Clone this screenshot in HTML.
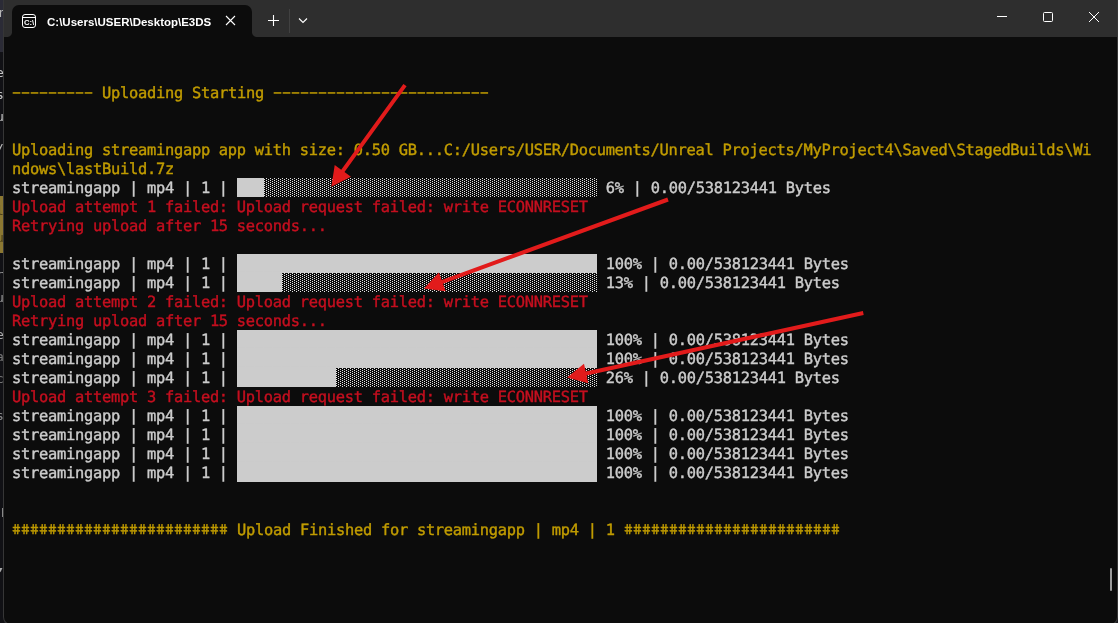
<!DOCTYPE html>
<html lang="en">
<head>
<meta charset="utf-8">
<title>C:\Users\USER\Desktop\E3DS</title>
<style>
html,body{margin:0;padding:0;}
body{width:1118px;height:623px;overflow:hidden;background:#1c1c20;position:relative;font-family:"Liberation Sans",sans-serif;}
#strip{position:absolute;left:0;top:0;width:4px;height:623px;background:#111115;overflow:hidden;will-change:transform;font-family:"DejaVu Sans Mono","Liberation Mono",monospace;}
#strip .top{position:absolute;left:0;top:0;width:4px;height:52px;background:#2b2b36;}
#strip .yl{position:absolute;left:0;top:196px;width:4px;height:57px;background:#8c7832;}
#strip .bar{position:absolute;left:2px;top:508px;width:1.5px;height:9px;background:#8a8a8a;}
#strip span{position:absolute;left:-4px;width:9px;height:19px;line-height:19px;font-size:13px;color:#c4c4c4;}
#win{position:absolute;left:3px;top:0;width:1115px;height:625px;background:#0c0c0c;border:1px solid #363636;border-top:0;box-sizing:border-box;border-radius:0 0 8px 8px;overflow:hidden;}
#titlebar{position:absolute;left:0;top:0;width:100%;height:37px;background:#2e2e2e;will-change:transform;}
#tab{position:absolute;left:8px;top:5px;width:240px;height:32px;background:#0c0c0c;border-radius:7px 7px 0 0;}
#tab:before,#tab:after{content:"";position:absolute;bottom:0;width:5px;height:5px;background:radial-gradient(circle at 0 0,#2e2e2e 4.5px,#0c0c0c 5.5px);}
#tab:before{left:-5px;}
#tab:after{right:-5px;background:radial-gradient(circle at 100% 0,#2e2e2e 4.5px,#0c0c0c 5.5px);}
#tabtitle{position:absolute;left:35px;top:9px;font-size:11.5px;line-height:16px;font-weight:bold;color:#fff;white-space:pre;letter-spacing:0px;}
svg{position:absolute;overflow:visible;}
#term{position:absolute;left:0;top:0;width:1118px;height:623px;font-family:"DejaVu Sans Mono","Liberation Mono",monospace;font-size:15.4px;letter-spacing:-0.2716px;will-change:transform;text-rendering:geometricPrecision;-webkit-text-stroke:0.4px;}
.ln{position:absolute;left:12px;height:19px;line-height:19px;white-space:pre;}
.d{display:inline-block;height:19px;vertical-align:top;letter-spacing:-4.6562px;-webkit-text-stroke:0;transform:translate(-4.45px,-0.35px) scale(1.95,1.2);transform-origin:0 9.8px;}
.h{display:inline-block;height:19px;vertical-align:top;letter-spacing:1.3166px;transform:translateX(0.58px) skewX(11.5deg) scale(0.85,0.89);transform-origin:0 8.5px;}
.y{color:#c19c00;}
.r{color:#c50f1f;}
.w{color:#cccccc;}
.f{display:inline-block;height:19px;position:relative;top:-1px;overflow:hidden;vertical-align:top;background:#cccccc;color:#cccccc;}
.e{display:inline-block;height:19px;position:relative;top:-1px;overflow:hidden;vertical-align:top;color:transparent;letter-spacing:0;
background-color:#0c0c0c;
background-image:radial-gradient(circle at 0.5px 1.5px,#e4e4e4 0.55px,rgba(228,228,228,0) 0.6px),radial-gradient(circle at 2.5px 0.5px,#e4e4e4 0.55px,rgba(228,228,228,0) 0.6px);
background-size:4px 2px;}
#thumb{position:absolute;left:1110px;top:568px;width:2px;height:23px;background:#9a9a9a;border-radius:1px;}
</style>
</head>
<body>
<div id="strip"><div class="top"></div><div class="yl"></div><div class="bar"></div>
<span style="top:3px;font-family:'Liberation Sans',sans-serif;font-size:13px;left:-1px;color:#b5b5b5">r</span><span style="top:63px">e</span><span style="top:85px">s</span><span style="top:107px">u</span><span style="top:139px;color:#bbb">/</span><span style="top:201px;color:#4a3f18">l</span><span style="top:228px;color:#4a3f18">u</span><span style="top:265px;color:#999">r</span><span style="top:288px;color:#999">u</span><span style="top:325px;color:#aaa">e</span><span style="top:347px;color:#777">a</span><span style="top:369px;color:#777">c</span><span style="top:406px;color:#888">s</span><span style="top:560px;color:#aaa;font-size:11px;left:-3px">&#9662;</span>
</div>
<div id="win">
  <div id="titlebar">
    <div id="tab">
      <svg style="left:10px;top:9px" width="14" height="14" viewBox="0 0 14 14" fill="none" stroke="#fff" stroke-width="1">
        <rect x="0.5" y="0.5" width="13" height="13" rx="2.5"/>
        <line x1="0.5" y1="3.5" x2="13.5" y2="3.5"/>
        <text x="1.9" y="11" font-family="Liberation Sans, sans-serif" font-size="7" font-weight="bold" fill="#fff" stroke="none" textLength="10.3" lengthAdjust="spacingAndGlyphs">C:\</text>
      </svg>
      <div id="tabtitle">C:\Users\USER\Desktop\E3DS</div>
      <svg style="left:214px;top:11px" width="9" height="9" viewBox="0 0 9 9" stroke="#fff" stroke-width="1.1" fill="none"><path d="M0 0L9 9M9 0L0 9"/></svg>
    </div>
    <svg style="left:264px;top:15px" width="11" height="11" viewBox="0 0 11 11" stroke="#fff" stroke-width="1.1" fill="none"><path d="M5.5 0V11M0 5.5H11"/></svg>
    <div style="position:absolute;left:285px;top:9px;width:1px;height:24px;background:#414141"></div>
    <svg style="left:295px;top:18px" width="8" height="5" viewBox="0 0 8 5" stroke="#fff" stroke-width="1.1" fill="none"><path d="M0 0.5L4 4.5L8 0.5"/></svg>
    <svg style="left:993px;top:16px" width="10" height="1" viewBox="0 0 10 1" stroke="#fff" stroke-width="1" fill="none"><path d="M0 0.5H10"/></svg>
    <svg style="left:1039px;top:12px" width="10" height="10" viewBox="0 0 10 10" stroke="#fff" stroke-width="1" fill="none"><rect x="0.5" y="0.5" width="9" height="9" rx="1"/></svg>
    <svg style="left:1085px;top:12px" width="10" height="10" viewBox="0 0 10 10" stroke="#fff" stroke-width="1" fill="none"><path d="M0 0L10 10M10 0L0 10"/></svg>
  </div>
</div>
<div id="term">
<div class="ln y" style="top:84px"><span class="d" style="width:81px">---------</span> Uploading Starting <span class="d" style="width:216px">------------------------</span></div>
<div class="ln y" style="top:141px">Uploading streamingapp app with size: 0.50 GB...C:/Users/USER/Documents/Unreal Projects/MyProject4\Saved\StagedBuilds\Wi</div>
<div class="ln y" style="top:160px">ndows\lastBuild.7z</div>
<div class="ln w" style="top:179px">streamingapp | mp4 | 1 | <span class="f" style="width:27px">███</span><span class="e" style="width:333px;background-position:0px 0px">░░░░░░░░░░░░░░░░░░░░░░░░░░░░░░░░░░░░░</span> 6% | 0.00/538123441 Bytes</div>
<div class="ln r" style="top:198px">Upload attempt 1 failed: Upload request failed: write ECONNRESET</div>
<div class="ln r" style="top:217px">Retrying upload after 15 seconds...</div>
<div class="ln w" style="top:255px">streamingapp | mp4 | 1 | <span class="f" style="width:360px">████████████████████████████████████████</span> 100% | 0.00/538123441 Bytes</div>
<div class="ln w" style="top:274px">streamingapp | mp4 | 1 | <span class="f" style="width:45px">█████</span><span class="e" style="width:315px;background-position:-2px -1px">░░░░░░░░░░░░░░░░░░░░░░░░░░░░░░░░░░░</span> 13% | 0.00/538123441 Bytes</div>
<div class="ln r" style="top:293px">Upload attempt 2 failed: Upload request failed: write ECONNRESET</div>
<div class="ln r" style="top:312px">Retrying upload after 15 seconds...</div>
<div class="ln w" style="top:331px">streamingapp | mp4 | 1 | <span class="f" style="width:360px">████████████████████████████████████████</span> 100% | 0.00/538123441 Bytes</div>
<div class="ln w" style="top:350px">streamingapp | mp4 | 1 | <span class="f" style="width:360px">████████████████████████████████████████</span> 100% | 0.00/538123441 Bytes</div>
<div class="ln w" style="top:369px">streamingapp | mp4 | 1 | <span class="f" style="width:99px">███████████</span><span class="e" style="width:261px;background-position:0px 0px">░░░░░░░░░░░░░░░░░░░░░░░░░░░░░</span> 26% | 0.00/538123441 Bytes</div>
<div class="ln r" style="top:388px">Upload attempt 3 failed: Upload request failed: write ECONNRESET</div>
<div class="ln w" style="top:407px">streamingapp | mp4 | 1 | <span class="f" style="width:360px">████████████████████████████████████████</span> 100% | 0.00/538123441 Bytes</div>
<div class="ln w" style="top:426px">streamingapp | mp4 | 1 | <span class="f" style="width:360px">████████████████████████████████████████</span> 100% | 0.00/538123441 Bytes</div>
<div class="ln w" style="top:445px">streamingapp | mp4 | 1 | <span class="f" style="width:360px">████████████████████████████████████████</span> 100% | 0.00/538123441 Bytes</div>
<div class="ln w" style="top:464px">streamingapp | mp4 | 1 | <span class="f" style="width:360px">████████████████████████████████████████</span> 100% | 0.00/538123441 Bytes</div>
<div class="ln y" style="top:521px"><span class="h" style="width:216px">########################</span> Upload Finished for streamingapp | mp4 | 1 <span class="h" style="width:216px">########################</span></div>
</div>
<div id="thumb"></div>
<svg id="arrows" style="left:0;top:0" width="1118" height="623" viewBox="0 0 1118 623">
  <g fill="#e21b1b">
    <polygon points="403.4,83.9 341.2,169.7 334.7,165.0 331.4,186.7 350.9,176.8 344.5,172.1 406.6,86.3"/>
    <polygon points="667.3,197.6 441.6,280.0 438.9,272.5 424.0,288.6 445.7,291.3 443.0,283.8 668.7,201.4"/>
    <polygon points="862.9,311.0 585.7,371.5 584.0,363.7 567.1,377.6 588.3,383.2 586.6,375.4 863.7,315.0"/>
  </g>
</svg>
</body>
</html>
